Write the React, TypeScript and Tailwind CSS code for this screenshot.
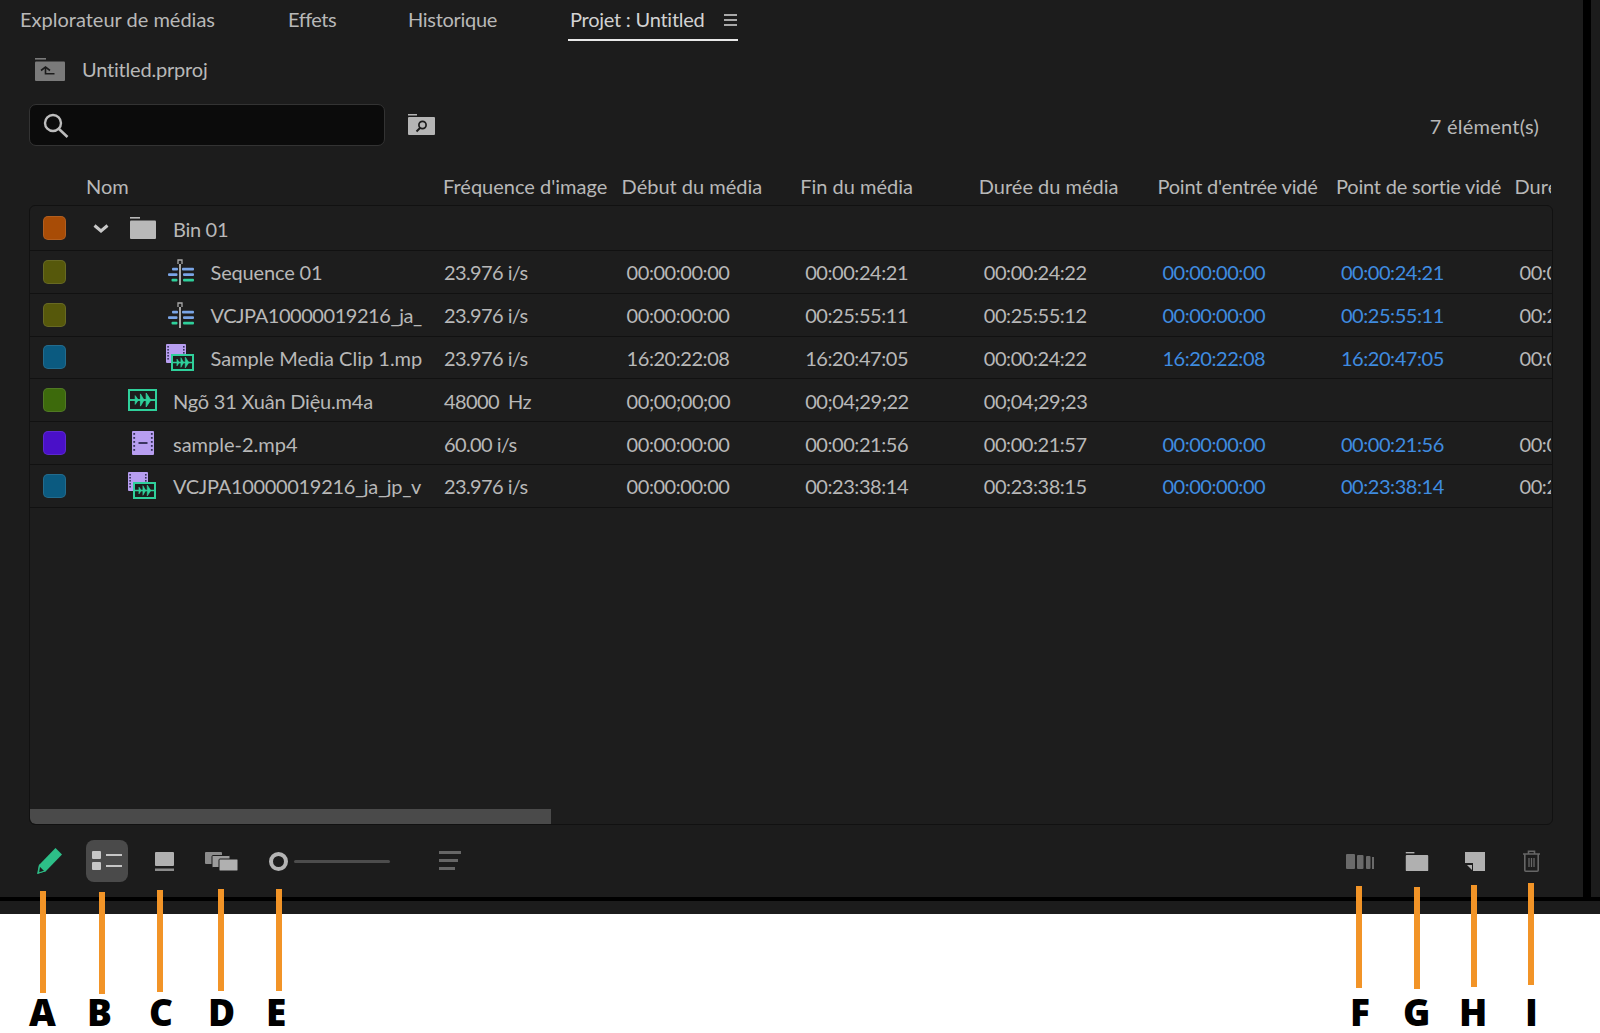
import React from "react";

const GRID = "grid grid-cols-[413px_repeat(6,178.6px)_36px]";

function Swatch({ c }: { c: string }) {
  return <span className="ml-[13px] block h-[24px] w-[23px] shrink-0 rounded-[5px] border border-white/10" style={{ backgroundColor: c }} />;
}

const Folder = ({ fill = "#b9b9b9", w = 26, h = 22 }: { fill?: string; w?: number; h?: number }) => (
  <svg width={w} height={h} viewBox="0 0 26 22">
    <rect x="0" y="0" width="10" height="1.6" fill={fill} />
    <rect x="0" y="3.5" width="26" height="18.5" rx="1" fill={fill} />
  </svg>
);

const SeqIcon = () => (
  <svg width="26" height="26" viewBox="0 0 26 26" className="shrink-0">
    <rect x="4" y="8.8" width="6" height="2.8" rx="1" fill="#7aa5e6" />
    <rect x="14" y="8.8" width="12" height="2.8" rx="1" fill="#7aa5e6" />
    <rect x="0" y="14.3" width="9.5" height="2.8" rx="1" fill="#7aa5e6" />
    <rect x="15" y="14.3" width="11" height="2.8" rx="1" fill="#7aa5e6" />
    <rect x="3.5" y="19.8" width="6" height="2.8" rx="1" fill="#2fd09b" />
    <rect x="15" y="19.8" width="11" height="2.8" rx="1" fill="#2fd09b" />
    <rect x="11" y="5" width="2" height="21" fill="#a8a8a8" />
    <path d="M10 5V1h4v4" fill="none" stroke="#a8a8a8" strokeWidth="1.3" />
  </svg>
);

const Wave = ({ x, y, w, h }: { x: number; y: number; w: number; h: number }) => (
  <svg x={x} y={y} width={w} height={h} viewBox="0 0 24 16" preserveAspectRatio="none">
    <path d="M0 8h24" stroke="#2fd09b" strokeWidth="2.2" />
    <path d="M5 3 8 8 5 13ZM10 1 13.5 8 10 15ZM15.5 0 20 8 15.5 16Z" fill="#2fd09b" stroke="#2fd09b" strokeWidth="0.8" />
  </svg>
);

const ClipIcon = () => (
  <svg width="28" height="27" viewBox="0 0 28 27" className="shrink-0">
    <rect x="0" y="0" width="20" height="19" rx="1" fill="#b79ef0" />
    {[2, 5, 8, 11, 14].map((y) => (
      <g key={y}>
        <rect x="1.3" y={y} width="1.6" height="1.6" fill="#35305a" />
        <rect x="17" y={y} width="1.6" height="1.6" fill="#35305a" />
      </g>
    ))}
    <rect x="6" y="11" width="21" height="15" fill="#1d1d1d" stroke="#2fd09b" strokeWidth="2" />
    <Wave x={7} y={13} w={19} h={11} />
  </svg>
);

const AudioIcon = () => (
  <svg width="29" height="22" viewBox="0 0 29 22" className="shrink-0">
    <rect x="1" y="1" width="27" height="20" fill="#1d1d1d" stroke="#2fd09b" strokeWidth="2" />
    <Wave x={2} y={4} w={25} h={14} />
  </svg>
);

const VideoIcon = () => (
  <svg width="22" height="24" viewBox="0 0 22 24" className="shrink-0">
    <rect x="0" y="0" width="22" height="24" rx="1" fill="#b79ef0" />
    {[2, 6, 10, 14, 18].map((y) => (
      <g key={y}>
        <rect x="1.3" y={y} width="1.8" height="1.8" fill="#35305a" />
        <rect x="18.9" y={y} width="1.8" height="1.8" fill="#35305a" />
      </g>
    ))}
    <rect x="6.5" y="11" width="9" height="2" fill="#3a3560" />
  </svg>
);

const Chevron = () => (
  <svg width="16" height="9" viewBox="0 0 16 9" className="shrink-0">
    <path d="M1.5 1.5 8 7l6.5-5.5" fill="none" stroke="#c8c8c8" strokeWidth="3" />
  </svg>
);

type Row = {
  swatch: string;
  iconBox: string;
  icon: React.ReactNode;
  name: string;
  track: string;
  cells: string[];
  tail?: string;
};

const rows: Row[] = [
  { swatch: "#56580b", iconBox: "ml-[102px] w-[42.5px]", icon: <SeqIcon />, name: "Sequence 01", track: "tracking-[-0.15px]", cells: ["23.976 i/s", "00:00:00:00", "00:00:24:21", "00:00:24:22", "00:00:00:00", "00:00:24:21"], tail: "00:00" },
  { swatch: "#56580b", iconBox: "ml-[102px] w-[42.5px]", icon: <SeqIcon />, name: "VCJPA10000019216_ja_", track: "tracking-[-0.45px]", cells: ["23.976 i/s", "00:00:00:00", "00:25:55:11", "00:25:55:12", "00:00:00:00", "00:25:55:11"], tail: "00:25" },
  { swatch: "#0b5a80", iconBox: "ml-[100px] w-[44.5px]", icon: <ClipIcon />, name: "Sample Media Clip 1.mp", track: "tracking-[0px]", cells: ["23.976 i/s", "16:20:22:08", "16:20:47:05", "00:00:24:22", "16:20:22:08", "16:20:47:05"], tail: "00:00" },
  { swatch: "#3d6a0c", iconBox: "ml-[62px] w-[45px]", icon: <AudioIcon />, name: "Ngõ 31 Xuân Diệu.m4a", track: "tracking-[-0.2px]", cells: ["48000  Hz", "00;00;00;00", "00;04;29;22", "00;04;29;23", "", ""] },
  { swatch: "#4a10c8", iconBox: "ml-[66px] w-[41px]", icon: <VideoIcon />, name: "sample-2.mp4", track: "tracking-[0px]", cells: ["60.00 i/s", "00:00:00:00", "00:00:21:56", "00:00:21:57", "00:00:00:00", "00:00:21:56"], tail: "00:00" },
  { swatch: "#0b5a80", iconBox: "ml-[62px] w-[45px]", icon: <ClipIcon />, name: "VCJPA10000019216_ja_jp_v", track: "tracking-[-0.32px]", cells: ["23.976 i/s", "00:00:00:00", "00:23:38:14", "00:23:38:15", "00:00:00:00", "00:23:38:14"], tail: "00:23" },
];

const headers = ["Fréquence d'image", "Début du média", "Fin du média", "Durée du média", "Point d'entrée vidé", "Point de sortie vidé"];

const callouts = [
  { l: "A", x: "left-[40px]", top: "top-[891px]", lab: "left-[29px]" },
  { l: "B", x: "left-[99px]", top: "top-[892px]", lab: "left-[87px]" },
  { l: "C", x: "left-[157px]", top: "top-[890px]", lab: "left-[149px]" },
  { l: "D", x: "left-[218px]", top: "top-[889px]", lab: "left-[208px]" },
  { l: "E", x: "left-[276px]", top: "top-[889px]", lab: "left-[266px]" },
  { l: "F", x: "left-[1356px]", top: "top-[886px]", lab: "left-[1350px]" },
  { l: "G", x: "left-[1414px]", top: "top-[887px]", lab: "left-[1403px]" },
  { l: "H", x: "left-[1471px]", top: "top-[885px]", lab: "left-[1459px]" },
  { l: "I", x: "left-[1528px]", top: "top-[883px]", lab: "left-[1525px]" },
];

export default function App() {
  return (
    <div className="relative flex h-[1033px] w-[1600px] flex-col overflow-hidden bg-white font-['Lato','Liberation_Sans',sans-serif] text-[20px] text-[#b8b8b8]">
      <div className="flex h-[897px] bg-[#1c1c1c]">
        <main className="flex w-[1583px] flex-col">
          {/* tabs */}
          <div className="flex h-[41px] items-stretch pl-[20px]">
            <div className="flex w-[268px] items-center pb-[3px]">Explorateur de médias</div>
            <div className="flex w-[120px] items-center pb-[3px] tracking-[-0.5px]">Effets</div>
            <div className="flex w-[160px] items-center pb-[3px] tracking-[-0.3px]">Historique</div>
            <div className="flex h-[41px] w-[170px] items-center justify-between border-b-2 border-[#e8e8e8] pb-[2px] pl-[2px] text-[#d2d2d2]">
              <span className="tracking-[-0.25px]">Projet : Untitled</span>
              <svg width="15" height="14" viewBox="0 0 15 14" className="mt-[2px]">
                <path d="M1 2h13M1 7h13M1 12h13" stroke="#a8a8a8" strokeWidth="2" />
              </svg>
            </div>
          </div>
          {/* path */}
          <div className="flex h-[56px] items-center pl-[35px]">
            <svg width="30" height="23" viewBox="0 0 30 23">
              <rect x="0" y="0" width="11" height="1.6" fill="#7a7a7a" />
              <rect x="0" y="3.5" width="30" height="19.5" rx="1" fill="#7a7a7a" />
              <path d="M6 12.5l4.5-3.5 4.5 3.5" fill="none" stroke="#1c1c1c" strokeWidth="1.6" />
              <path d="M10.5 9.5v6.3h9" fill="none" stroke="#1c1c1c" strokeWidth="1.6" />
            </svg>
            <span className="ml-[17px] tracking-[-0.2px]">Untitled.prproj</span>
          </div>
          {/* search */}
          <div className="mt-[7px] flex h-[42px] items-center pl-[29px]">
            <div className="flex h-[42px] w-[356px] items-center rounded-[7px] border border-[#333333] bg-[#0b0b0b] pl-[13px]">
              <svg width="26" height="25" viewBox="0 0 26 25">
                <circle cx="10" cy="10" r="8" fill="none" stroke="#bdbdbd" strokeWidth="2.4" />
                <path d="M16 16l8.5 8" stroke="#bdbdbd" strokeWidth="2.6" />
              </svg>
            </div>
            <svg width="27" height="21" viewBox="0 0 27 21" className="mb-[1px] ml-[23px]">
              <rect x="0" y="0" width="9" height="1.5" fill="#b5b5b5" />
              <rect x="0" y="3" width="27" height="18" rx="1" fill="#b5b5b5" />
              <circle cx="14.5" cy="11" r="3.6" fill="none" stroke="#1c1c1c" strokeWidth="1.7" />
              <path d="M12 14 8.5 17.5" stroke="#1c1c1c" strokeWidth="1.9" />
            </svg>
            <span className="ml-auto mt-[2px] pr-[44px] tracking-[0.25px]">7 élément(s)</span>
          </div>
          {/* header */}
          <div className={`${GRID} ml-[30px] h-[59px] items-end pb-[7px] leading-[24px]`}>
            <div className="pl-[56px]">Nom</div>
            {headers.map((h, i) => (
              <div key={h} className={`whitespace-nowrap ${i >= 4 ? "tracking-[-0.2px]" : ""}`}>{h}</div>
            ))}
            <div className="overflow-hidden whitespace-nowrap">Durée</div>
          </div>
          {/* table */}
          <div className="ml-[29px] flex h-[620px] w-[1524px] flex-col overflow-hidden rounded-[6px] border border-[#111111] bg-[#1d1d1d]">
            <div className="flex h-[45px] shrink-0 items-center border-b border-[#111111]">
              <Swatch c="#a84c06" />
              <span className="ml-[27px]"><Chevron /></span>
              <span className="ml-[21px]"><Folder /></span>
              <span className="ml-[17px] mt-[2px] tracking-[-0.3px]">Bin 01</span>
            </div>
            {rows.map((r) => (
              <div key={r.name} className={`${GRID} h-[42.8px] items-center border-b border-[#111111]`}>
                <div className="flex h-full items-center">
                  <Swatch c={r.swatch} />
                  <span className={`flex shrink-0 items-center ${r.iconBox}`}>{r.icon}</span>
                  <span className={`mt-[1px] whitespace-nowrap ${r.track}`}>{r.name}</span>
                </div>
                {r.cells.map((c, i) => (
                  <div key={i} className={`mt-[1px] whitespace-pre ${i === 0 ? "pl-[1px] tracking-[-0.6px]" : "pl-[5px] tracking-[-0.45px]"} ${i >= 4 ? "text-[#3f8ce0]" : ""}`}>{c}</div>
                ))}
                <div className="mt-[1px] overflow-hidden whitespace-nowrap pl-[5px] tracking-[-0.45px]">{r.tail ?? ""}</div>
              </div>
            ))}
            <div className="flex-1" />
            <div className="h-[15px] w-[521px] rounded-bl-[6px] bg-[#4a4a4a]" />
          </div>
          {/* toolbar */}
          <div className="flex h-[72px] items-start pt-[15px]">
            <div className="flex h-[42px] items-center pl-[37px]">
              <svg width="25" height="26" viewBox="0 0 25 26">
                <path d="M18.5 0 25 6.5 9 23 0 26l2-9Z" fill="#2dbf88" />
                <path d="M2.5 17.5 8 23 1.5 25Z" fill="#1c1c1c" stroke="#2dbf88" strokeWidth="1.2" />
              </svg>
              <div className="ml-[24px] flex h-[42px] w-[42px] items-center justify-center rounded-[8px] bg-[#4a4a4a]">
                <svg width="30" height="20" viewBox="0 0 30 20">
                  <rect x="0" y="0" width="9" height="8" rx="1" fill="#c6c6c6" />
                  <rect x="0" y="11" width="9" height="8" rx="1" fill="#c6c6c6" />
                  <rect x="14" y="3" width="16" height="2" fill="#c6c6c6" />
                  <rect x="14" y="14" width="16" height="2" fill="#c6c6c6" />
                </svg>
              </div>
              <svg width="19" height="19" viewBox="0 0 19 19" className="ml-[27px]">
                <rect x="0" y="0" width="19" height="14" rx="1" fill="#b0b0b0" />
                <rect x="0" y="16.5" width="19" height="2.5" fill="#8c8c8c" />
              </svg>
              <svg width="33" height="19" viewBox="0 0 33 19" className="ml-[31px]">
                <rect x="0" y="0" width="17" height="12" rx="1" fill="#8c8c8c" />
                <rect x="7" y="3.5" width="18" height="12" rx="1" fill="#9c9c9c" stroke="#1c1c1c" strokeWidth="1" />
                <rect x="14" y="7" width="19" height="12" rx="1" fill="#b0b0b0" stroke="#1c1c1c" strokeWidth="1" />
              </svg>
              <span className="ml-[31px] block h-[19px] w-[19px] rounded-full border-[4px] border-[#b4b4b4]" />
              <span className="ml-[6px] block h-[3px] w-[96px] rounded-full bg-[#4c4c4c]" />
              <svg width="22" height="20" viewBox="0 0 22 20" className="ml-[49px]">
                <rect x="0" y="0" width="22" height="3" fill="#666666" />
                <rect x="0" y="8" width="19" height="3" fill="#666666" />
                <rect x="0" y="16" width="16" height="3" fill="#666666" />
              </svg>
            </div>
            <div className="ml-auto mr-[42px] flex h-[42px] items-center">
              <svg width="28" height="15" viewBox="0 0 28 15">
                <rect x="0" y="0" width="9" height="15" rx="1" fill="#6a6a6a" />
                <rect x="11" y="1" width="6.5" height="14" rx="1" fill="#6a6a6a" />
                <rect x="20" y="2" width="4.5" height="13" rx="1" fill="#6a6a6a" />
                <rect x="26" y="3" width="2" height="12" fill="#6a6a6a" />
              </svg>
              <span className="ml-[31px]"><Folder fill="#b0b0b0" w={24} h={19} /></span>
              <svg width="20" height="19" viewBox="0 0 20 19" className="ml-[36px]">
                <path d="M0 0h20v19H8V11H0Z" fill="#b0b0b0" />
                <path d="M2 13h5v5Z" fill="#b0b0b0" />
              </svg>
              <svg width="19" height="22" viewBox="0 0 19 22" className="ml-[37px]">
                <path d="M1 4h17M6.5 4V1.2h6V4" fill="none" stroke="#666666" strokeWidth="1.6" />
                <path d="M2.8 4v16.2a1 1 0 0 0 1 1h11.4a1 1 0 0 0 1-1V4" fill="none" stroke="#666666" strokeWidth="1.6" />
                <path d="M7 8v9M9.5 8v9M12 8v9" stroke="#666666" strokeWidth="1.3" />
              </svg>
            </div>
          </div>
        </main>
        <div className="w-[8px] bg-black" />
        <div className="flex-1" />
      </div>
      <div className="h-[4px] bg-black" />
      <div className="h-[13px] bg-[#1c1c1c]" />
      {callouts.map((c) => (
        <React.Fragment key={c.l}>
          <span className={`absolute ${c.x} ${c.top} h-[102px] w-[6px] bg-[#f29427]`} />
          <span className={`absolute ${c.lab} top-[987px] font-['Open_Sans',sans-serif] text-[37px] font-extrabold leading-[50px] text-black`}>{c.l}</span>
        </React.Fragment>
      ))}
    </div>
  );
}
